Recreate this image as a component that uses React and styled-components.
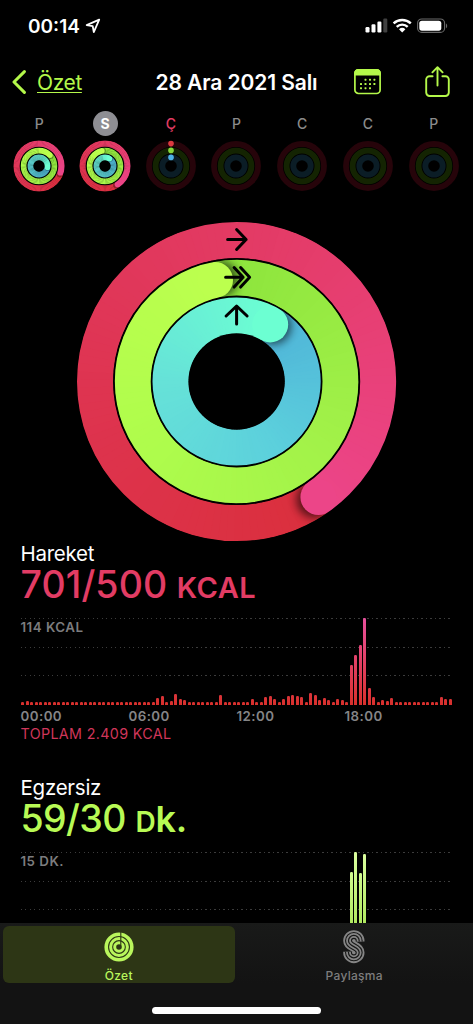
import { useId } from "react";
import styled, { createGlobalStyle } from "styled-components";

const RED = ["#da2f3d", "#de3450", "#e43c69", "#ec4588"];
const GREEN = ["#8ce43c", "#a0f048", "#aefc4c", "#bcff4e"];
const BLUE = ["#4fb4d8", "#5cd0dc", "#66e2d8", "#6cffd2"];

const MOVE = Array(96).fill(3);
Object.assign(MOVE, {
  1: 4, 30: 7, 31: 9, 33: 4, 34: 11.5, 35: 6, 36: 5, 44: 10.5, 51: 6,
  54: 8.5, 55: 9.5, 56: 6, 58: 6.5, 59: 9, 60: 10, 61: 9, 62: 8.5,
  64: 12.5, 65: 10, 66: 5, 67: 7.5, 68: 5.5, 70: 6, 71: 5.5,
  73: 40, 74: 50, 75: 60, 76: 87, 77: 17.5, 78: 8, 80: 5.5, 81: 4.5, 82: 7,
  93: 8, 94: 6, 95: 6.5,
});

const EXERCISE = Array(96).fill(0);
Object.assign(EXERCISE, { 73: 67.5, 74: 87, 75: 66, 76: 85 });

const DAYS = [
  { label: "P", ends: [107, 45, 98] },
  { label: "S", ends: [145, 348, 30], selected: true },
  { label: "Ç", today: true },
  { label: "P" },
  { label: "C" },
  { label: "C" },
  { label: "P" },
];

export default function App() {
  return (
    <>
      <GlobalStyle />
      <Screen>
        <StatusBar>
          <Clock>00:14</Clock>
          <LocationIcon />
          <StatusIcons />
        </StatusBar>

        <NavBar>
          <BackLink>
            <svg width="14" height="24" viewBox="0 0 14 24" fill="none">
              <path d="M12.4 1.6 2 12l10.4 10.4" stroke="#b4f84a" strokeWidth="3" strokeLinecap="round" strokeLinejoin="round" />
            </svg>
            <BackText>Özet</BackText>
          </BackLink>
          <Title>28 Ara 2021 Salı</Title>
          <NavActions>
            <CalendarIcon />
            <ShareIcon />
          </NavActions>
        </NavBar>

        <Week>
          {DAYS.map((day, index) => (
            <Day key={index}>
              <DayLabel $selected={day.selected} $today={day.today}>
                {day.label}
              </DayLabel>
              {day.ends ? <MiniRings ends={day.ends} /> : <EmptyRings today={day.today} />}
            </Day>
          ))}
        </Week>

        <Hero>
          <ActivityRings />
        </Hero>

        <Section $height={234.4}>
          <SectionTitle>Hareket</SectionTitle>
          <Value $color="#e23c64">
            <Amount $spacing="0.1px">701/500</Amount>
            <Unit $size={29} $spacing="0.5px">KCAL</Unit>
          </Value>
          <Chart data={MOVE} label="114 KCAL" colors="#e8509c, #d8302c" />
          <Axis>
            <span>00:00</span>
            <span>06:00</span>
            <span>12:00</span>
            <span>18:00</span>
          </Axis>
          <Total>TOPLAM 2.409 KCAL</Total>
        </Section>

        <Section $height={240}>
          <SectionTitle>Egzersiz</SectionTitle>
          <Value $color="#b8fa55">
            <Amount $spacing="-0.6px">59/30</Amount>
            <Unit $size={36} $spacing="-0.2px">
              <SmallCap>D</SmallCap>k.
            </Unit>
          </Value>
          <Chart data={EXERCISE} label="15 DK." colors="#dcffa0, #a6e452" />
        </Section>

        <TabBar>
          <Tabs>
            <Tab $active>
              <SummaryIcon />
              <TabLabel>Özet</TabLabel>
            </Tab>
            <Tab>
              <SharingIcon />
              <TabLabel>Paylaşma</TabLabel>
            </Tab>
          </Tabs>
          <HomeIndicator />
        </TabBar>
      </Screen>
    </>
  );
}

function point(c, r, degrees) {
  const a = ((degrees - 90) * Math.PI) / 180;
  return [c + r * Math.cos(a), c + r * Math.sin(a)];
}

function arc(c, r, from, to) {
  return `M${point(c, r, from)}A${r} ${r} 0 0 1 ${point(c, r, to)}`;
}

function mix(colors, t) {
  const pos = Math.min(t, 0.9999) * (colors.length - 1);
  const i = Math.floor(pos);
  const f = pos - i;
  const channel = (hex, n) => parseInt(hex.slice(1 + n * 2, 3 + n * 2), 16);
  const rgb = [0, 1, 2].map((n) =>
    Math.round(channel(colors[i], n) * (1 - f) + channel(colors[i + 1], n) * f)
  );
  return `rgb(${rgb.join(",")})`;
}

// One full lap that finishes at `end` degrees, with a round cap over its own tail.
function Ring({ c, r, width, end, colors, shadow }) {
  const id = useId();
  const steps = 120;
  const size = 360 / steps;
  const covering = 14;
  const [capX, capY] = point(c, r, end);
  const [shadowX, shadowY] = point(c, r, end + shadow.offset);

  const segment = (i) => (
    <path
      key={i}
      d={arc(c, r, end + i * size, end + (i + 1) * size + (i < steps - 1 ? 1 : 0))}
      stroke={mix(colors, i / (steps - 1))}
      strokeWidth={width + 0.8}
    />
  );
  const segments = Array.from({ length: steps }, (_, i) => segment(i));

  return (
    <g fill="none">
      <filter id={`${id}blur`} x="-50%" y="-50%" width="200%" height="200%">
        <feGaussianBlur stdDeviation={shadow.blur} />
      </filter>
      <clipPath id={`${id}clip`}>
        <circle cx={c} cy={c} r={r + width / 2} />
      </clipPath>
      {segments}
      <g clipPath={`url(#${id}clip)`}>
        <circle
          cx={shadowX}
          cy={shadowY}
          r={width / 2}
          fill="#000"
          opacity={shadow.opacity}
          filter={`url(#${id}blur)`}
        />
      </g>
      {segments.slice(-covering)}
      <circle cx={capX} cy={capY} r={width / 2} fill={colors[colors.length - 1]} />
    </g>
  );
}

function Gaps({ c, radii, hole, width }) {
  return (
    <g>
      <g fill="none" stroke="#000" strokeWidth={width}>
        {radii.map((r) => (
          <circle key={r} cx={c} cy={c} r={r} />
        ))}
      </g>
      <circle cx={c} cy={c} r={hole} />
    </g>
  );
}

function ActivityRings() {
  const shadow = { offset: 3, blur: 4, opacity: 0.6 };
  return (
    <svg width="321" height="321" viewBox="-0.6 -0.5 321 321">
      <Ring c={160} r={141.6} width={36} end={144.7} colors={RED} shadow={{ ...shadow, offset: 2 }} />
      <Ring c={160} r={103.8} width={36} end={348} colors={GREEN} shadow={shadow} />
      <Ring c={160} r={66.2} width={36} end={30.5} colors={BLUE} shadow={shadow} />
      <Gaps c={160} radii={[160.5, 122.7, 85]} hole={48.2} width={1.8} />
      <g fill="none" stroke="#000" strokeWidth="3" strokeLinecap="round" strokeLinejoin="round">
        <path d="M151 18h18.5M160 8l9.5 10-9.5 10" />
        <path d="M149 55.8h17.5M157.5 46l9 9.8-9 9.8M164 46l9 9.8-9 9.8" />
        <path d="M160 102.5V85M149.5 94.5 160 84.5l10.5 10" />
      </g>
    </svg>
  );
}

function MiniRings({ ends }) {
  const shadow = { offset: 5, blur: 0.7, opacity: 0.3 };
  return (
    <svg width="52" height="52" viewBox="0 0 52 52">
      <Ring c={26} r={22.3} width={6.2} end={ends[0]} colors={RED} shadow={shadow} />
      <Ring c={26} r={15.4} width={5.8} end={ends[1]} colors={GREEN} shadow={shadow} />
      <Ring c={26} r={8.7} width={5.8} end={ends[2]} colors={BLUE} shadow={shadow} />
      <Gaps c={26} radii={[26.1, 18.8, 12]} hole={5.7} width={1.1} />
    </svg>
  );
}

function EmptyRings({ today }) {
  return (
    <svg width="52" height="52" viewBox="0 0 52 52" fill="none" strokeWidth="5.8">
      <circle cx="26" cy="26" r="22" stroke="#26040a" />
      <circle cx="26" cy="26" r="15.4" stroke="#142402" />
      <circle cx="26" cy="26" r="8.7" stroke="#0b1d26" />
      {today && (
        <g stroke="none">
          <circle cx="26" cy="3.6" r="2.8" fill="#dc3a40" />
          <circle cx="26" cy="10.4" r="2.8" fill="#86d83c" />
          <circle cx="26" cy="17.4" r="2.8" fill="#4db2e6" />
        </g>
      )}
    </svg>
  );
}

function Chart({ data, label, colors }) {
  return (
    <Plot>
      <GridLine $row={1} />
      <GridLine $row={2} />
      <GridLine $row={3} />
      <ScaleLabel>{label}</ScaleLabel>
      <Bars>
        {data.map((height, index) => (
          <Bar key={index} $colors={colors} style={{ height }} />
        ))}
      </Bars>
    </Plot>
  );
}

function LocationIcon() {
  return (
    <svg width="16" height="16" viewBox="0 0 16 16" fill="none">
      <path d="M14.2 1.6 1.7 7.1l6 1.1 1.1 6z" stroke="#fff" strokeWidth="1.8" strokeLinejoin="round" />
    </svg>
  );
}

function StatusIcons() {
  return (
    <StatusSvg width="84" height="16" viewBox="0 0 84 16">
      <g fill="#fff">
        <rect x="0.5" y="9" width="4" height="5.5" rx="1.2" />
        <rect x="6.5" y="6.3" width="4" height="8.2" rx="1.2" />
        <rect x="12.4" y="3.5" width="4" height="11" rx="1.2" />
        <rect x="18.3" y="0.6" width="4" height="13.9" rx="1.2" opacity="0.25" />
      </g>
      <g fill="none" stroke="#fff" strokeWidth="2.4">
        <path d="M28.6 5.4a12.6 12.6 0 0 1 17.2 0" />
        <path d="M31.7 8.8a8 8 0 0 1 11 0" />
      </g>
      <path d="M37.2 14.6 34 11.2a4.8 4.8 0 0 1 6.4 0z" fill="#fff" />
      <rect x="52.6" y="1" width="27" height="13.4" rx="4.2" fill="none" stroke="#6a6a6a" strokeWidth="1.1" />
      <rect x="54.3" y="2.7" width="22" height="10" rx="2.6" fill="#fff" />
      <path d="M81 5.4v4.8c1.6-.7 1.6-4.1 0-4.8z" fill="#6a6a6a" />
    </StatusSvg>
  );
}

function CalendarIcon() {
  const dots = [[11.5, 10.7], [16, 10.7], [20.4, 10.7], [7, 15], [11.5, 15], [16, 15], [20.4, 15], [7, 19.2], [11.5, 19.2], [16, 19.2]];
  return (
    <svg width="27" height="26" viewBox="0 0 27 26">
      <rect x="0.9" y="0.9" width="25.2" height="23.6" rx="3.6" fill="none" stroke="#b4f84a" strokeWidth="1.7" />
      <path d="M.1 6.6V4.2A4 4 0 0 1 4.1.1h18.8a4 4 0 0 1 4 4.1v2.4z" fill="#b4f84a" />
      {dots.map(([x, y]) => (
        <rect key={`${x}-${y}`} x={x - 1} y={y - 1} width="2" height="2" rx="0.6" fill="#b4f84a" />
      ))}
    </svg>
  );
}

function ShareIcon() {
  return (
    <svg width="25" height="32" viewBox="0 0 25 32" fill="none" stroke="#b4f84a" strokeWidth="1.9" strokeLinecap="round" strokeLinejoin="round">
      <path d="M7.6 10.2H4.6A3.4 3.4 0 0 0 1.2 13.6v13a3.4 3.4 0 0 0 3.4 3.4h15.8a3.4 3.4 0 0 0 3.4-3.4v-13a3.4 3.4 0 0 0-3.4-3.4h-3" />
      <path d="M12.5 19.5V1.4M7.4 6.3l5.1-5.1 5.1 5.1" />
    </svg>
  );
}

function SummaryIcon() {
  return (
    <svg width="30" height="34" viewBox="0 -2 30 34" fill="none" stroke="#b9f65c">
      <circle cx="15" cy="15" r="12.8" strokeWidth="3.6" />
      <circle cx="15" cy="15" r="8.4" strokeWidth="3" />
      <circle cx="15" cy="15" r="4.3" strokeWidth="3" />
      <path d="M16.8 0V13.5" stroke="#2d3615" strokeWidth="1.1" />
    </svg>
  );
}

function SharingIcon() {
  const s = "M16.2 11.5V10.8a5.2 5.2 0 0 0-10.7 0c0 6.4 10.7 5.2 10.7 11.7a5.2 5.2 0 0 1-10.7 0v-.8";
  return (
    <svg width="22" height="34" viewBox="0 0 22 34" fill="none">
      <path d={s} stroke="#858585" strokeWidth="10.6" />
      <path d={s} stroke="#171817" strokeWidth="7" />
      <path d={s} stroke="#858585" strokeWidth="4.8" />
      <path d={s} stroke="#171817" strokeWidth="1.2" />
    </svg>
  );
}

const GlobalStyle = createGlobalStyle`
  * {
    box-sizing: border-box;
  }

  body {
    margin: 0;
    background: #000;
    color: #fff;
    font-family: Inter, "Liberation Sans", sans-serif;
  }

  svg {
    display: block;
    flex: none;
  }
`;

const Screen = styled.main`
  position: relative;
  width: 473px;
  height: 1024px;
  overflow: hidden;
  background: #000;
`;

const StatusBar = styled.header`
  display: flex;
  align-items: center;
  height: 52px;
  padding: 0 24px 0 28px;
`;

const Clock = styled.span`
  width: 57px;
  font-size: 19px;
  font-weight: 600;
`;

const StatusSvg = styled.svg`
  margin-left: auto;
`;

const NavBar = styled.nav`
  display: grid;
  grid-template-columns: 1fr auto 1fr;
  align-items: center;
  height: 59px;
  padding: 0 23px 0 12px;
`;

const BackLink = styled.a`
  display: flex;
  align-items: center;
  gap: 11px;
`;

const BackText = styled.span`
  padding-top: 2px;
  color: #b4f84a;
  font-size: 21px;
  letter-spacing: -0.4px;
  text-decoration: underline;
  text-decoration-thickness: 1px;
  text-underline-offset: 2px;
`;

const Title = styled.h1`
  margin: 0;
  padding: 2px 0 0 11px;
  font-size: 21px;
  font-weight: 600;
  letter-spacing: -0.1px;
`;

const NavActions = styled.div`
  display: flex;
  align-items: center;
  justify-content: flex-end;
  gap: 44px;
`;

const Week = styled.div`
  display: grid;
  grid-template-columns: repeat(7, 1fr);
  height: 90px;
  padding: 0 6.5px;
`;

const Day = styled.div`
  display: flex;
  flex-direction: column;
  align-items: center;
  gap: 4px;
`;

const DayLabel = styled.span`
  width: 25px;
  height: 25px;
  border-radius: 50%;
  background: ${({ $selected }) => ($selected ? "#8e8e93" : "transparent")};
  color: ${({ $selected, $today }) => ($selected ? "#fff" : $today ? "#e23c64" : "#8b8b8b")};
  font-size: 14px;
  font-weight: ${({ $selected }) => ($selected ? 700 : 500)};
  line-height: 25px;
  text-align: center;
`;

const Hero = styled.div`
  display: flex;
  justify-content: center;
  height: 342px;
  padding-top: 20px;
`;

const Section = styled.section`
  height: ${({ $height }) => $height}px;
  padding: 0 20.5px;
`;

const SectionTitle = styled.h2`
  margin: 0;
  font-size: 20.5px;
  font-weight: 400;
  line-height: 21px;
  letter-spacing: -0.25px;
`;

const Value = styled.p`
  display: flex;
  align-items: baseline;
  gap: 9.5px;
  height: 54px;
  margin: 0;
  color: ${({ $color }) => $color};
  line-height: 42px;
`;

const Amount = styled.span`
  font-size: 37.5px;
  font-weight: 500;
  letter-spacing: ${({ $spacing }) => $spacing};
`;

const Unit = styled.span`
  font-size: ${({ $size }) => $size}px;
  font-weight: 600;
  letter-spacing: ${({ $spacing }) => $spacing};
`;

const SmallCap = styled.span`
  font-size: 28px;
`;

const Plot = styled.div`
  display: grid;
  grid-template-rows: repeat(3, 28.5px);
  height: 87px;
`;

const GridLine = styled.div`
  grid-row: ${({ $row }) => $row};
  grid-column: 1;
  height: 1px;
  width: 430px;
  background: repeating-linear-gradient(90deg, #3c3c3c 0 1px, transparent 1px 4.5px);
`;

const ScaleLabel = styled.span`
  grid-row: 1;
  grid-column: 1;
  padding-top: 1px;
  color: #7c7c7e;
  font-size: 13.3px;
  font-weight: 600;
  line-height: 16px;
  letter-spacing: 0.5px;
`;

const Bars = styled.div`
  display: flex;
  grid-row: 1 / 4;
  grid-column: 1;
  align-items: flex-end;
  gap: 1.5px;
  height: 87px;
  padding-left: 0.5px;
`;

const Bar = styled.div`
  flex: none;
  width: 3px;
  border-radius: 1.2px 1.2px 0 0;
  background: linear-gradient(${({ $colors }) => $colors}) bottom / 100% 87px no-repeat;
`;

const Axis = styled.div`
  display: grid;
  grid-template-columns: repeat(4, 108px);
  height: 23px;
  color: #858587;
  font-size: 13.3px;
  font-weight: 600;
  line-height: 23px;
  letter-spacing: 0.45px;
`;

const Total = styled.p`
  margin: 0;
  color: #d0365a;
  font-size: 14.3px;
  line-height: 12px;
  letter-spacing: 0.35px;
`;

const TabBar = styled.footer`
  position: absolute;
  right: 0;
  bottom: 0;
  left: 0;
  height: 101px;
  background: linear-gradient(#191a19, #131313 60%);
`;

const Tabs = styled.div`
  display: grid;
  grid-template-columns: 1fr 1fr;
  gap: 4px;
  height: 84px;
  padding: 3px 3px 0;
`;

const Tab = styled.div`
  display: flex;
  flex-direction: column;
  align-items: center;
  justify-content: space-between;
  height: 57px;
  padding-top: 4px;
  border-radius: 6px;
  background: ${({ $active }) => ($active ? "#2d3615" : "transparent")};
  color: ${({ $active }) => ($active ? "#b9f65c" : "#7d7d7d")};
`;

const TabLabel = styled.span`
  font-size: 12px;
  font-weight: 500;
  line-height: 14px;
  letter-spacing: 0.3px;
`;

const HomeIndicator = styled.div`
  width: 169px;
  height: 6.5px;
  margin: 0 auto;
  border-radius: 4px;
  background: #fff;
`;
